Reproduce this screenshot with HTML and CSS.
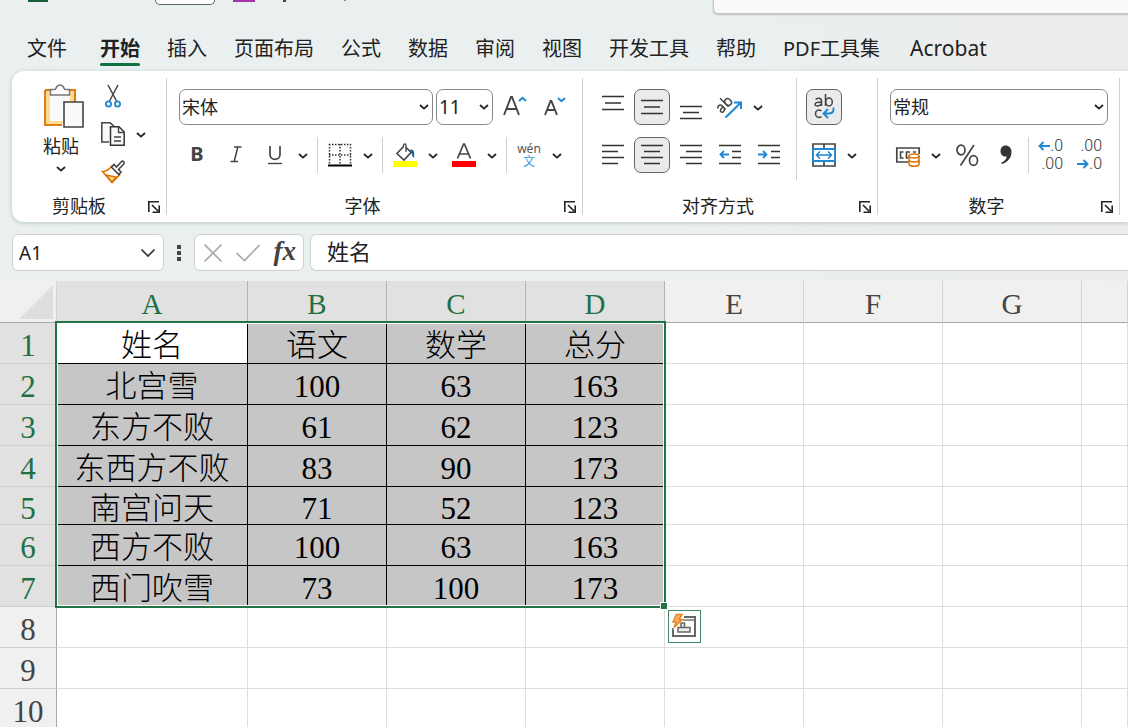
FILE: index.html
```html
<!DOCTYPE html>
<html lang="zh-CN">
<head>
<meta charset="utf-8">
<title>工作表</title>
<link rel="stylesheet" href="styles.css">
</head>
<body>
<svg class="defs" aria-hidden="true">
  <symbol id="chev" viewBox="0 0 10 6"><path d="M1 1l4 3.6L9 1" fill="none" stroke="#222" stroke-width="1.8"/></symbol>
  <symbol id="launch" viewBox="0 0 12 12"><path d="M.8 11V.8H11M4 4l6 6M11.2 4.5v6.7H4.5" fill="none" stroke="#222" stroke-width="1.6"/></symbol>
</svg>
<div class="app">
  <header class="titlebar">
    <span class="app-mark"></span><span class="autosave"></span><span class="save-mark"></span><span class="undo-mark"></span><span class="redo-mark"></span>
    <input class="search" type="text" aria-label="搜索">
  </header>
  <nav class="tabs">
    <button class="tab file">文件</button><button class="tab active">开始</button><button class="tab">插入</button><button class="tab">页面布局</button><button class="tab">公式</button><button class="tab">数据</button><button class="tab">审阅</button><button class="tab">视图</button><button class="tab">开发工具</button><button class="tab">帮助</button><button class="tab">PDF工具集</button><button class="tab latin">Acrobat</button>
  </nav>
  <section class="ribbon">
    <div class="group clipboard">
      <div class="clip-body">
        <button class="paste">
          <svg width="42" height="46" viewBox="0 0 42 46"><path d="M2 7h30v12M19 42H2V7" fill="none" stroke="#e07d10" stroke-width="2"/><path d="M3 8h28v11H20v22H3z" fill="#fadb94"/><path d="M7 10h20v8H20v20H7z" fill="#fafafa"/><path d="M7.500 12V6.500h4.500c1 0 1-4.500 5-4.500s4 4.500 5 4.500h4.500V12z" fill="#fff" stroke="#777" stroke-width="1.500"/><path d="M21 19h19v25H21z" fill="#fafafa" stroke="#444" stroke-width="1.600"/></svg>
          <span>粘贴</span>
          <svg width="10" height="6"><use href="#chev"/></svg>
        </button>
        <div class="clip-tools">
          <div class="split"><button class="tool" aria-label="剪切"><svg width="24" height="26" viewBox="0 0 24 26"><path d="M7 2l8.500 16M17 2L8.500 18" fill="none" stroke="#444" stroke-width="1.500"/><circle cx="7.500" cy="21" r="2.600" fill="#fff" stroke="#1e88d2" stroke-width="1.800"/><circle cx="16.500" cy="21" r="2.600" fill="#fff" stroke="#1e88d2" stroke-width="1.800"/></svg></button></div>
          <div class="split"><button class="tool" aria-label="复制"><svg width="24" height="24" viewBox="0 0 24 24"><path d="M8 20H.8V.8H9L13 4" fill="#fafafa" stroke="#444" stroke-width="1.500"/><path d="M9.500 4.800H18l5.200 5.200v13.200H9.500z" fill="#fafafa" stroke="#333" stroke-width="1.500"/><path d="M17.500 5v5.500H23M13 15h7M13 19h7" fill="none" stroke="#444" stroke-width="1.400"/></svg></button><button class="drop" aria-label="复制选项"><svg width="10" height="6"><use href="#chev"/></svg></button></div>
          <div class="split"><button class="tool" aria-label="格式刷"><svg width="24" height="24" viewBox="0 0 24 24"><path d="M10.500 6.500L18.500 15 11 22.500 1.500 11.500C5 11.500 8 9.500 10.500 6.500z" fill="#fff" stroke="#e07000" stroke-width="1.600"/><path d="M5 15l10 2-4 5z" fill="#fadb94" stroke="#e07000" stroke-width="1.300"/><path d="M10.500 7l2.500-2.500 2.500 2.500 5-5.500c1.500-1 3.500 1 2 2.800L17.500 9.500 20 12l-2.200 2.500z" fill="#fff" stroke="#444" stroke-width="1.600"/></svg></button></div>
        </div>
      </div>
      <div class="caption"><span>剪贴板</span><button class="launcher" aria-label="剪贴板设置"><svg width="12" height="12"><use href="#launch"/></svg></button></div>
    </div>

    <div class="group font">
      <div class="rows">
        <div class="row">
          <label class="combo font-name"><select aria-label="字体"><option>宋体</option></select><svg width="10" height="6"><use href="#chev"/></svg></label>
          <label class="combo font-size"><select aria-label="字号"><option>11</option></select><svg width="10" height="6"><use href="#chev"/></svg></label>
          <button class="tool" aria-label="增大字号"><svg width="26" height="26" viewBox="0 0 26 26"><path d="M3 21L10 3h1L18 21M5.800 15h9.500" fill="none" stroke="#444" stroke-width="1.900"/><path d="M18 7l3.500-3.200L25 7" fill="none" stroke="#1e88d2" stroke-width="2"/></svg></button>
          <button class="tool" aria-label="减小字号"><svg width="26" height="26" viewBox="0 0 26 26"><path d="M5 21L10.600 7h.8L17 21M7.300 16h7.500" fill="none" stroke="#444" stroke-width="1.900"/><path d="M18 4l3.500 3.200L25 4" fill="none" stroke="#1e88d2" stroke-width="2"/></svg></button>
        </div>
        <div class="row">
          <button class="tool bold">B</button>
          <button class="tool italic" aria-label="倾斜"><svg width="12" height="18" viewBox="0 0 12 18"><path d="M4 1h7.500M.5 15.500H8M7.800 1L4.200 15.500" fill="none" stroke="#444" stroke-width="1.500"/></svg></button>
          <div class="split"><button class="tool" aria-label="下划线"><svg width="16" height="20" viewBox="0 0 16 20"><path d="M3 1v8.500c0 6.500 10 6.500 10 0V1" fill="none" stroke="#444" stroke-width="1.700"/><path d="M1 18.500h14" stroke="#444" stroke-width="1.400"/></svg></button><button class="drop" aria-label="下划线选项"><svg width="10" height="6"><use href="#chev"/></svg></button></div>
          <i class="rule"></i>
          <div class="split"><button class="tool" aria-label="边框"><svg width="24" height="24" viewBox="0 0 24 24"><path d="M1 1.500h22M1 12h22M1.500 1v20M12 1v20M22.500 1v20" fill="none" stroke="#333" stroke-width="1.500" stroke-dasharray="1.500 1.500"/><path d="M0 22.500h24" stroke="#000" stroke-width="2"/></svg></button><button class="drop" aria-label="边框选项"><svg width="10" height="6"><use href="#chev"/></svg></button></div>
          <i class="rule"></i>
          <div class="split"><button class="tool" aria-label="填充颜色"><svg width="24" height="24" viewBox="0 0 24 24"><path d="M10.500 3.500L4 10.500l7 6.500 7.200-7.700L13 4.500" fill="#fff" stroke="#444" stroke-width="1.600"/><path d="M10.500 4V2.500c0-2 2.500-2 2.500 0V9" fill="none" stroke="#444" stroke-width="1.300"/><path d="M17 7c3-2 5 1 4 8-2-1-2-4-3-6z" fill="#1567b4"/><path d="M0 18h24v6H0z" fill="#ff0"/></svg></button><button class="drop" aria-label="填充颜色选项"><svg width="10" height="6"><use href="#chev"/></svg></button></div>
          <div class="split"><button class="tool" aria-label="字体颜色"><svg width="24" height="24" viewBox="0 0 24 24"><path d="M5.500 15.500L11.600 1h.8l6.100 14.500M7.500 11h9" fill="none" stroke="#444" stroke-width="1.700"/><path d="M0 18h24v6H0z" fill="red"/></svg></button><button class="drop" aria-label="字体颜色选项"><svg width="10" height="6"><use href="#chev"/></svg></button></div>
          <i class="rule"></i>
          <div class="split"><button class="tool phonetic"><span>wén</span><span class="blue">文</span></button><button class="drop" aria-label="拼音选项"><svg width="10" height="6"><use href="#chev"/></svg></button></div>
        </div>
      </div>
      <div class="caption"><span>字体</span><button class="launcher" aria-label="字体设置"><svg width="12" height="12"><use href="#launch"/></svg></button></div>
    </div>

    <div class="group align">
      <div class="align-body">
        <div class="rows">
          <div class="row">
            <button class="tool" aria-label="顶端对齐"><svg width="22" height="26" viewBox="0 0 22 26"><path d="M0 2.500h22M3 9h16M0 15.500h22" stroke="#333" stroke-width="1.500"/></svg></button>
            <button class="tool on" aria-label="垂直居中"><svg width="22" height="26" viewBox="0 0 22 26"><path d="M0 6.500h22M3 13h16M0 19.500h22" stroke="#333" stroke-width="1.500"/></svg></button>
            <button class="tool" aria-label="底端对齐"><svg width="22" height="26" viewBox="0 0 22 26"><path d="M0 12.500h22M3 18.500h16M0 24.500h22" stroke="#333" stroke-width="1.500"/></svg></button>
            <div class="split"><button class="tool" aria-label="方向"><svg width="26" height="26" viewBox="0 0 26 26"><g transform="rotate(-45 8 12)" fill="none" stroke="#444" stroke-width="1.500"><path d="M1 8.500c2-1.800 5-1.500 5 1V15M6 11c-3 0-5 .5-5 2.200C1 15.500 5 15.800 6 12.500M10 3v12"/><ellipse cx="13" cy="11.400" rx="3" ry="3.600"/></g><path d="M8.500 23.500L23.500 9M17 8.500h7V15" fill="none" stroke="#1e88d2" stroke-width="2"/></svg></button><button class="drop" aria-label="方向选项"><svg width="10" height="6"><use href="#chev"/></svg></button></div>
          </div>
          <div class="row">
            <button class="tool" aria-label="左对齐"><svg width="22" height="24" viewBox="0 0 22 24"><path d="M0 2.500h22M0 8.500h16M0 14.500h22M0 20.500h16" stroke="#333" stroke-width="1.500"/></svg></button>
            <button class="tool on" aria-label="居中"><svg width="22" height="24" viewBox="0 0 22 24"><path d="M0 2.500h22M3 8.500h16M0 14.500h22M3 20.500h16" stroke="#333" stroke-width="1.500"/></svg></button>
            <button class="tool" aria-label="右对齐"><svg width="22" height="24" viewBox="0 0 22 24"><path d="M0 2.500h22M6 8.500h16M0 14.500h22M6 20.500h16" stroke="#333" stroke-width="1.500"/></svg></button>
            <button class="tool" aria-label="减少缩进"><svg width="22" height="24" viewBox="0 0 22 24"><path d="M0 2.500h22M13 8.500h9M13 14.500h9M0 20.500h22" stroke="#333" stroke-width="1.500"/><path d="M10 11.500H1.500M5 8l-3.500 3.500L5 15" fill="none" stroke="#1e88d2" stroke-width="1.800"/></svg></button>
            <button class="tool" aria-label="增加缩进"><svg width="22" height="24" viewBox="0 0 22 24"><path d="M0 2.500h22M13 8.500h9M13 14.500h9M0 20.500h22" stroke="#333" stroke-width="1.500"/><path d="M0 11.500h8.500M5 8l3.500 3.500L5 15" fill="none" stroke="#1e88d2" stroke-width="1.800"/></svg></button>
          </div>
        </div>
        <div class="rows wrap-col">
          <div class="row"><button class="tool on wrap-text" aria-label="自动换行"><svg width="24" height="28" viewBox="0 0 24 28"><g fill="none" stroke="#444" stroke-width="1.500"><path d="M3.500 6.500c2-2 6-2 6 1.500v5M9.500 9c-4 0-6.500.5-6.500 2.300 0 2.500 5.500 2 6.500-.8M13.500 1v12M9.500 18c-3-2-6-.5-6 2.800s3 4.800 6 2.800"/><ellipse cx="17" cy="9" rx="3.300" ry="3.900"/></g><path d="M21.500 14.500v2c0 3-2 4-5 4H12M16 16l-4.500 4.500L16 25" fill="none" stroke="#1e88d2" stroke-width="1.900"/></svg></button></div>
          <div class="row"><div class="split"><button class="tool" aria-label="合并后居中"><svg width="24" height="24" viewBox="0 0 24 24"><path d="M1 1h22v22H1zM12 1v22" fill="#fff" stroke="#444" stroke-width="1.700"/><path d="M1 6h22v12H1z" fill="#fff" stroke="#1e88d2" stroke-width="1.800"/><path d="M4.500 12h15M8 8.500L4.500 12 8 15.500M16 8.500l3.500 3.500-3.500 3.500" fill="none" stroke="#1e88d2" stroke-width="1.600"/></svg></button><button class="drop" aria-label="合并选项"><svg width="10" height="6"><use href="#chev"/></svg></button></div></div>
        </div>
      </div>
      <div class="caption"><span>对齐方式</span><button class="launcher" aria-label="对齐设置"><svg width="12" height="12"><use href="#launch"/></svg></button></div>
    </div>

    <div class="group number">
      <div class="rows">
        <div class="row"><label class="combo number-format"><select aria-label="数字格式"><option>常规</option></select><svg width="10" height="6"><use href="#chev"/></svg></label></div>
        <div class="row">
          <div class="split"><button class="tool" aria-label="会计数字格式"><svg width="26" height="24" viewBox="0 0 26 24"><path d="M13 19H1.800V5h22.400v6" fill="none" stroke="#444" stroke-width="1.700"/><path d="M8.500 9H5.500v6h3M15 9h-3.500v6H13M18 9h3" fill="none" stroke="#444" stroke-width="1.600"/><path d="M14 13v8c0 3 10 3 10 0v-8" fill="#fff" stroke="#e07000" stroke-width="1.600"/><ellipse cx="19" cy="13" rx="5" ry="2" fill="#fff" stroke="#e07000" stroke-width="1.600"/><path d="M14 17c0 2.500 10 2.500 10 0" fill="none" stroke="#e07000" stroke-width="1.500"/></svg></button><button class="drop" aria-label="会计格式选项"><svg width="10" height="6"><use href="#chev"/></svg></button></div>
          <button class="tool" aria-label="百分比样式"><svg width="24" height="24" viewBox="0 0 24 24"><g fill="none" stroke="#444" stroke-width="1.700"><ellipse cx="6" cy="7" rx="4" ry="4.800"/><ellipse cx="18.500" cy="17.500" rx="4" ry="4.800"/><path d="M19 2L5.500 22.500"/></g></svg></button>
          <button class="tool" aria-label="千位分隔样式"><svg width="14" height="22" viewBox="0 0 14 22"><path d="M6.500 1.500c3.500 0 6 2.500 6 6.500 0 6-4 10-9.500 12l-.8-1.300c3.500-1.500 5.200-3.500 5.500-6.200C4 13 1.500 10.500 1.500 7.200s2-5.700 5-5.700z" fill="#333"/></svg></button>
          <i class="rule"></i>
          <button class="tool decimals"><span><svg width="12" height="10" viewBox="0 0 12 10"><path d="M12 5H1.500M5.500 1l-4 4 4 4" fill="none" stroke="#1e88d2" stroke-width="1.900"/></svg>.0</span><span>.00</span></button>
          <button class="tool decimals"><span>.00</span><span><svg width="12" height="10" viewBox="0 0 12 10"><path d="M0 5h10.500M6.500 1l4 4-4 4" fill="none" stroke="#1e88d2" stroke-width="1.900"/></svg>.0</span></button>
        </div>
      </div>
      <div class="caption"><span>数字</span><button class="launcher" aria-label="数字设置"><svg width="12" height="12"><use href="#launch"/></svg></button></div>
    </div>
  </section>

  <section class="formula-bar">
    <div class="name-box"><input type="text" value="A1" aria-label="名称框"><svg width="16" height="10" viewBox="0 0 16 10"><path d="M1.500 1.500L8 8l6.500-6.500" fill="none" stroke="#333" stroke-width="1.700"/></svg></div>
    <svg class="grip" width="4" height="16" viewBox="0 0 4 16"><path d="M0 0h4v4H0zM0 6h4v4H0zM0 12h4v4H0z" fill="#444"/></svg>
    <div class="fx-box">
      <button aria-label="取消"><svg width="18" height="18" viewBox="0 0 18 18"><path d="M.5.5l17 17M17.500.5l-17 17" stroke="#aaa" stroke-width="1.600"/></svg></button>
      <button aria-label="输入"><svg width="24" height="18" viewBox="0 0 24 18"><path d="M.5 9l8 7.500L23.500 1" fill="none" stroke="#aaa" stroke-width="1.700"/></svg></button>
      <button class="fx">fx</button>
    </div>
    <input class="formula" type="text" value="姓名" aria-label="编辑栏">
  </section>

  <main class="sheet">
    <table>
      <colgroup><col class="c-head"><col class="c-name"><col class="c"><col class="c"><col class="c"><col class="c"><col class="c"><col class="c"><col></colgroup>
      <thead><tr><th class="corner"><svg width="34" height="34" viewBox="0 0 34 34"><path d="M34 0v34H0z" fill="#dedede"/></svg></th><th class="sel">A</th><th class="sel">B</th><th class="sel">C</th><th class="sel">D</th><th>E</th><th>F</th><th>G</th><th></th></tr></thead>
      <tbody>
        <tr><th class="sel">1</th><td class="v cur">姓名</td><td class="v">语文</td><td class="v">数学</td><td class="v">总分</td><td></td><td></td><td></td><td></td></tr>
        <tr><th class="sel">2</th><td class="v">北宫雪</td><td class="v">100</td><td class="v">63</td><td class="v">163</td><td></td><td></td><td></td><td></td></tr>
        <tr><th class="sel">3</th><td class="v">东方不败</td><td class="v">61</td><td class="v">62</td><td class="v">123</td><td></td><td></td><td></td><td></td></tr>
        <tr><th class="sel">4</th><td class="v">东西方不败</td><td class="v">83</td><td class="v">90</td><td class="v">173</td><td></td><td></td><td></td><td></td></tr>
        <tr class="short"><th class="sel">5</th><td class="v">南宫问天</td><td class="v">71</td><td class="v">52</td><td class="v">123</td><td></td><td></td><td></td><td></td></tr>
        <tr><th class="sel">6</th><td class="v">西方不败</td><td class="v">100</td><td class="v">63</td><td class="v">163</td><td></td><td></td><td></td><td></td></tr>
        <tr><th class="sel">7</th><td class="v">西门吹雪</td><td class="v">73</td><td class="v">100</td><td class="v">173</td><td></td><td></td><td></td><td></td></tr>
        <tr><th>8</th><td></td><td></td><td></td><td></td><td></td><td></td><td></td><td></td></tr>
        <tr><th>9</th><td></td><td></td><td></td><td></td><td></td><td></td><td></td><td></td></tr>
        <tr><th>10</th><td></td><td></td><td></td><td></td><td></td><td></td><td></td><td></td></tr>
      </tbody>
    </table>
    <div class="selection">
      <span class="handle"></span>
      <button class="quick" aria-label="快速分析"><svg width="27" height="27" viewBox="0 0 27 27"><path d="M13 4h11v19H2v-8" fill="none" stroke="#666" stroke-width="2"/><path d="M12 7h12" stroke="#777" stroke-width="1.500"/><path d="M7 14.500h12v4.500H7zM10 14v-4h3.500v4" fill="#eee" stroke="#666" stroke-width="1.500"/><path d="M5 0h8L10 5h4L2 17l2-6H0z" fill="#fff"/><path d="M5.500 1.500H11L8 6.500h3.500L3 14.500l2.200-5.500H2z" fill="#f6b26b" stroke="#e88423" stroke-width="1.500"/></svg></button>
    </div>
  </main>
</div>
</body>
</html>
```
FILE: styles.css
```css
* { box-sizing: border-box; }
body {
  margin: 0;
  font-family: "Noto Sans", "Noto Sans CJK SC", sans-serif;
  color: #222;
}
button, input, select { font: inherit; color: inherit; margin: 0; padding: 0; border: 0; background: none; }
svg { display: block; flex: none; }
.defs { position: absolute; width: 0; height: 0; }
.app {
  display: flex;
  flex-direction: column;
  height: 100vh;
  overflow: hidden;
  background: linear-gradient(90deg, #e9f0ef, #eaf0f0 55%, #ececec);
}

.titlebar { display: flex; height: 14px; padding-left: 28px; align-items: flex-start; }
.app-mark { width: 20px; height: 2px; background: #185c37; }
.autosave { width: 60px; height: 5px; margin-left: 107px; background: #fff; border: 1px solid #666; border-top: 0; border-radius: 0 0 16px 16px; }
.save-mark { width: 22px; height: 2px; margin-left: 18px; background: #a435a8; }
.undo-mark { width: 3px; height: 2px; margin-left: 28px; background: #444; }
.redo-mark { width: 2px; height: 1px; margin-left: 58px; background: #888; }
.search { flex: 1; height: 14px; margin-left: 367px; background: #fafafa; border: 1px solid #c4c6c6; border-width: 0 0 1px 1px; border-bottom-left-radius: 5px; box-shadow: 0 1px 2px #bbb; }

.tabs { display: flex; gap: 27px; height: 57px; padding: 20px 0 5px 27px; font-size: 20px; line-height: 29px; }
.tab { height: 32px; border-bottom: 3px solid transparent; white-space: nowrap; }
.file { margin-right: 6px; }
.latin { padding-left: 3px; font-size: 21px; }
.active { font-weight: 700; position: relative; }
.active::after { content: ""; position: absolute; left: 0; right: 0; bottom: -3px; height: 3px; border-radius: 2px; background: #107040; }

.ribbon { display: flex; flex: none; height: 151px; margin-left: 12px; padding: 7px 0; background: #fff; border-radius: 12px 0 0 12px; box-shadow: 0 1px 4px #bcc4c4; }
.group { display: flex; flex-direction: column; justify-content: space-between; flex: none; border-right: 1px solid #d0d0d0; }
.clipboard { width: 155px; }
.font { width: 416px; }
.align { width: 295px; }
.number { width: 242px; }
.rows { display: flex; flex-direction: column; gap: 12px; padding: 11px 0 0 12px; }
.row { display: flex; gap: 3px; height: 36px; }
.split { display: flex; }
.tool, .drop { display: flex; align-items: center; justify-content: center; height: 36px; flex: none; }
.tool { width: 36px; padding-bottom: 1px; }
.drop { width: 20px; padding-top: 1px; }
.on { background: #ebebeb; border: 1px solid #666; border-radius: 7px; padding: 0; }
.rule { width: 1px; margin: 0 1px; background: #d0d0d0; }
.caption { display: flex; align-items: center; height: 26px; margin-bottom: -4px; font-size: 18px; }
.caption span { flex: 1; text-align: center; line-height: 26px; padding-bottom: 1px; }
.clipboard .caption { padding-left: 4px; }
.launcher { display: flex; justify-content: center; width: 24px; padding-top: 2px; }

.clip-body { display: flex; padding-left: 20px; }
.paste { display: flex; flex-direction: column; align-items: center; width: 58px; padding-top: 5px; font-size: 18px; line-height: 34px; }
.paste svg:first-child { margin-left: 6px; }
.paste svg:last-child { margin-top: 3px; }
.clip-tools { margin-left: 5px; }
.clip-tools .split { height: 38px; }

.combo { display: grid; align-items: center; height: 36px; border: 1px solid #888; border-radius: 7px; background: #fff; font-size: 18px; }
.combo select, .combo svg { grid-area: 1 / 1; }
.combo select { appearance: none; width: 100%; height: 34px; padding-left: 2px; outline: 0; }
.combo svg { justify-self: end; margin-right: 3px; pointer-events: none; }
.font-name { width: 254px; }
.font-size { width: 57px; font-size: 19px; }
.number-format { width: 218px; }
.bold { padding-bottom: 4px; font-size: 20px; font-weight: 700; color: #444; }
.phonetic { flex-direction: column; font-size: 12px; line-height: 13px; color: #555; }
.blue { color: #3c9cdc; }
.align-body { display: flex; }
.align-body .rows:first-child { width: 204px; }
.wrap-col { margin-left: 9px; padding: 11px 0 7px 9px; border-left: 1px solid #d0d0d0; }
.decimals { flex-direction: column; align-items: flex-end; padding-right: 6px; font: 300 16px/18px Roboto, sans-serif; color: #333; }
.decimals span { display: flex; align-items: center; }

.formula-bar { display: flex; align-items: center; flex: none; padding: 12px 0 10px 12px; height: 59px; }
.name-box, .fx-box { display: flex; align-items: center; height: 37px; background: #fff; border: 1px solid #ccd0d0; border-radius: 6px; }
.name-box { width: 152px; padding: 0 7px 0 6px; }
.name-box input { flex: 1; min-width: 0; font-size: 19px; }
.grip { margin: 0 13px; }
.fx-box { width: 110px; padding: 0 7px 0 9px; justify-content: space-between; }
.fx { font: italic 700 27px/34px "Liberation Serif", serif; color: #444; padding-bottom: 3px; }
.formula { flex: 1; min-width: 0; height: 37px; margin-left: 6px; padding: 0 0 6px 16px; background: #fff; border: 1px solid #ccd0d0; border-right: 0; border-radius: 6px 0 0 6px; font-size: 22px; }

.sheet { position: relative; flex: 1; overflow: hidden; background: #fff; }
table { width: 100%; table-layout: fixed; border-collapse: separate; border-spacing: 0; font: 300 31px/34px "Liberation Serif", "Noto Sans CJK SC", serif; color: #000; }
.c-head { width: 57px; }
.c-name { width: 191px; }
.c { width: 139px; }
th, td { height: 41px; padding: 6px 0 0; text-align: center; font-weight: 300; border: 0 solid #dedede; border-width: 0 1px 1px 0; }
.short th, .short td { height: 38px; line-height: 31px; }
th { background: #f0f0f0; color: #444; border-color: #cfcfcf; border-right-color: #a8a8a8; }
thead th { height: 42px; font-size: 29px; line-height: 35px; border-bottom-color: #a8a8a8; border-right-color: #d4d4d4; }
.sel { background: #e1e1e1; color: #1f7145; }
thead .sel { border-right-color: #b4b4b4; }
thead .corner { padding: 0 3px 0 0; }
.corner svg { margin-left: auto; }
.v { background: #c6c6c6; border-color: #000; }
.cur { background: #fff; }
.selection { position: absolute; left: 55px; top: 40px; width: 611px; height: 287px; border: 2px solid #217346; box-shadow: inset 0 0 0 1px #fff; pointer-events: none; }
.handle { position: absolute; right: -4px; bottom: -4px; width: 8px; height: 8px; background: #217346; border: 1px solid #fff; }
.quick { position: absolute; left: 611px; top: 287px; display: grid; place-items: center; width: 33px; height: 33px; background: #fff; border: 1px solid #3f8a62; }
```
